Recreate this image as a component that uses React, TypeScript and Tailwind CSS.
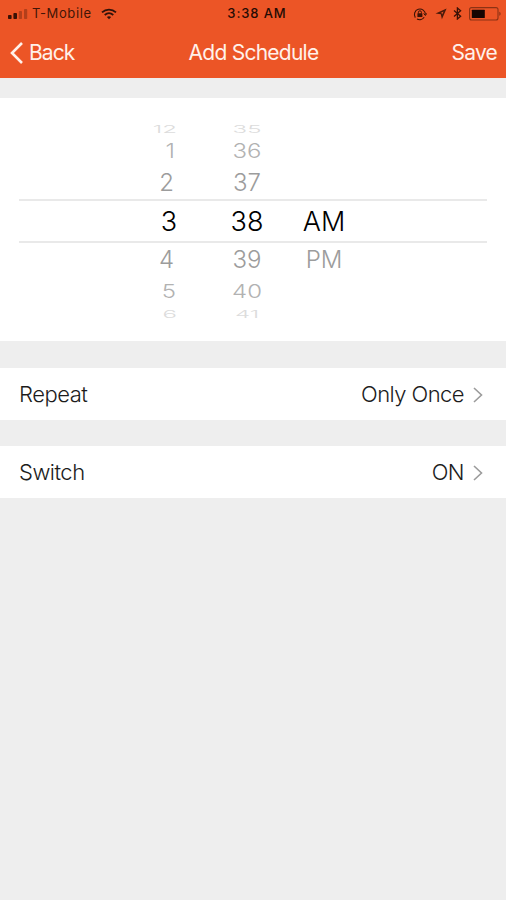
import { clsx } from 'clsx';

type PickerRow = {
  hour: string;
  minute: string;
  period?: string;
  row: string; // row height, colour and offset of the wheel line
  hourText: string;
  text: string;
};

const rows: PickerRow[] = [
  { hour: '12', minute: '35', row: 'h-3 text-[#dcdcdc]', hourText: 'pr-0 scale-y-[0.45]', text: 'scale-y-[0.45]' },
  { hour: '1', minute: '36', row: 'h-[31px] text-[#b2b2b2]', hourText: 'pr-0.5 scale-y-[0.84]', text: 'scale-y-[0.84]' },
  { hour: '2', minute: '37', row: 'h-[33px] text-[#9c9c9c]', hourText: 'pr-[3px]', text: '' },
  { hour: '3', minute: '38', period: 'AM', row: 'h-11 border-y-2 border-[#e9e9e9] text-black', hourText: '', text: '' },
  { hour: '4', minute: '39', period: 'PM', row: 'h-[33px] text-[#9c9c9c]', hourText: 'pr-[3px]', text: '' },
  { hour: '5', minute: '40', row: 'h-8 text-[#b2b2b2]', hourText: 'pr-px scale-y-[0.8]', text: 'scale-y-[0.8]' },
  { hour: '6', minute: '41', row: 'h-[11px] text-[#dcdcdc]', hourText: 'scale-y-[0.45]', text: 'scale-y-[0.45]' },
];

const SignalIcon = () => (
  <svg width="20" height="10" viewBox="0 0 20 10" fill="#3a1206">
    <rect x="0" y="6" width="3.6" height="4" rx="0.8" />
    <rect x="5.4" y="4" width="3.6" height="6" rx="0.8" />
    <rect x="10.8" y="2" width="3.2" height="8" rx="0.8" opacity="0.32" />
    <rect x="16" y="0" width="3.2" height="10" rx="0.8" opacity="0.32" />
  </svg>
);

const WifiIcon = () => (
  <svg width="16" height="12" viewBox="0 0 16 12" fill="none" stroke="#30120a">
    <path d="M1 4.3C5 0.6 11 0.6 15 4.3" strokeWidth="1.8" />
    <path d="M3.7 7C6.3 4.7 9.7 4.7 12.3 7" strokeWidth="1.8" />
    <path d="M5.9 9C7.1 8 8.9 8 10.1 9L8 11.3Z" fill="#30120a" stroke="none" />
  </svg>
);

const RotationLockIcon = () => (
  <svg width="14" height="14" viewBox="0 0 14 14" fill="none" stroke="#3a1206">
    <path d="M2.3 10.6A5.5 5.5 0 1 1 12.4 7.6M11.2 10.2A5.5 5.5 0 0 1 4 11.9" strokeWidth="1.1" />
    <path d="M10.6 6.5L12.4 8.5L13.8 6.3" strokeWidth="1" />
    <rect x="4.4" y="6.3" width="5" height="3.8" rx="0.5" fill="#3a1206" stroke="none" />
    <path d="M5.4 6.5V5.3A1.5 1.5 0 0 1 8.4 5.3V6.5" strokeWidth="1" />
  </svg>
);

const LocationIcon = () => (
  <svg width="12" height="12" viewBox="0 0 12 12" fill="#4a1a0b">
    <path fillRule="evenodd" d="M11.6 0.5L6.9 11.3L5.8 6.2L0.5 5.6ZM8.6 3.4L5.6 4.9L6.8 5.2L7.1 6.5Z" />
  </svg>
);

const BluetoothIcon = () => (
  <svg width="9" height="13" viewBox="0 0 9 13" fill="none" stroke="#3a1206" strokeWidth="1.3">
    <path d="M1 3.6L7.6 9.2L4.4 12V1L7.6 3.8L1 9.4" />
  </svg>
);

const BatteryIcon = () => (
  <svg width="33" height="14" viewBox="0 0 33 14">
    <rect x="0.6" y="0.6" width="28.4" height="12.4" rx="2" fill="none" stroke="#8c3214" strokeWidth="1.1" />
    <rect x="2.8" y="2.7" width="13" height="8.2" rx="0.5" fill="#160502" />
    <path d="M30.3 4.8C32 5.3 32 8.3 30.3 8.8Z" fill="#8c3214" />
  </svg>
);

const ChevronIcon = () => (
  <svg width="10" height="16" viewBox="0 0 10 16" fill="none" stroke="#9b9b9b" strokeWidth="1.6">
    <path d="M1 1L8.5 8L1 15" />
  </svg>
);

const Header = () => (
  <header className="h-[78px] bg-[#ec5526]">
    <div className="grid h-[27px] grid-cols-3 items-center pr-1 pl-2 text-[13px] text-[#421507]">
      <div className="flex items-center">
        <SignalIcon />
        <span className="ml-1 tracking-[0.6px] whitespace-nowrap">T-Mobile</span>
        <span className="ml-[9px]">
          <WifiIcon />
        </span>
      </div>
      <span className="pl-1 text-center font-medium tracking-[0.9px] text-[#250b04]">3:38 AM</span>
      <div className="flex items-center justify-end">
        <RotationLockIcon />
        <span className="ml-2">
          <LocationIcon />
        </span>
        <span className="mr-[7px] ml-[6px]">
          <BluetoothIcon />
        </span>
        <BatteryIcon />
      </div>
    </div>
    <div className="grid h-[51px] grid-cols-3 items-center pr-[9px] pl-2.5 text-[21px] text-[#fff1ea]">
      <button className="flex items-center gap-[6px] text-left">
        <svg width="13" height="22" viewBox="0 0 13 22" fill="none" stroke="currentColor" strokeWidth="2.6">
          <path d="M12 1L2 11L12 21" />
        </svg>
        <span className="tracking-[-0.9px]">Back</span>
      </button>
      <h1 className="text-center tracking-[-0.75px] whitespace-nowrap">Add Schedule</h1>
      <button className="text-right tracking-[-0.8px]">Save</button>
    </div>
  </header>
);

const TimePicker = () => (
  <section className="mt-5 h-[243px] bg-white px-[19px] pt-[25px]">
    {rows.map((r) => {
      const selected = r.hour === '3';
      return (
        <div
          key={r.hour}
          className={clsx(
            'flex items-center leading-none',
            selected ? 'text-[27px] font-[350]' : 'text-[24px] font-light',
            r.row
          )}
        >
          <span className={clsx('w-[158px] text-right', r.hourText)}>{r.hour}</span>
          <span className={clsx('ml-[45px] w-[50px] text-center', r.text)}>{r.minute}</span>
          <span className="ml-[22px] w-[60px] text-center">{r.period}</span>
        </div>
      );
    })}
  </section>
);

const SettingRow = ({ label, value }: { label: string; value: string }) => (
  <button className="mb-[26px] flex h-[52px] w-full items-center justify-between bg-white pt-px pr-[23px] pl-[19px] text-[22px] font-[350] text-[#1c1c1c]">
    <span className="tracking-[-0.5px]">{label}</span>
    <span className="flex items-center gap-[9px] tracking-[-0.55px]">
      {value}
      <ChevronIcon />
    </span>
  </button>
);

export default function App() {
  return (
    <main className="h-[900px] w-full overflow-hidden bg-[#eeeeee] font-['Inter',sans-serif]">
      <Header />
      <TimePicker />
      <div className="pt-[27px]">
        <SettingRow label="Repeat" value="Only Once" />
        <SettingRow label="Switch" value="ON" />
      </div>
    </main>
  );
}
